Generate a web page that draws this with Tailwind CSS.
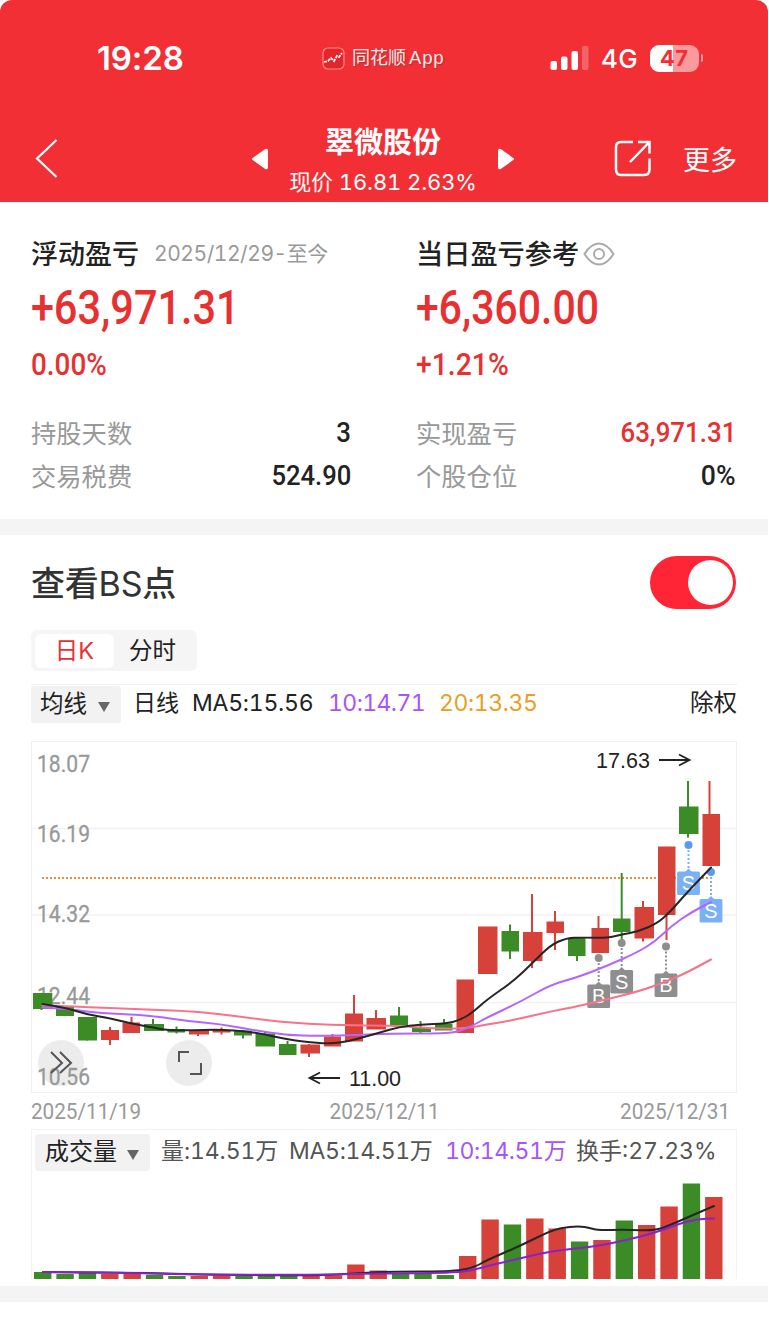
<!DOCTYPE html>
<html lang="zh-CN">
<head>
  <meta charset="UTF-8">
  <meta name="viewport" content="width=device-width, initial-scale=1.0">
  <title>翠微股份</title>
  <script src="https://cdn.jsdelivr.net/npm/@tailwindcss/browser@4"></script>
</head>
<body class="bg-white font-['Inter','Noto_Sans_CJK_SC',sans-serif] tabular-nums text-[#222] whitespace-nowrap">
  <div class="w-[768px] h-[1319px] overflow-hidden">

    <header class="h-[202px] bg-[#f12f35] rounded-t-[12px] text-white">
      <!-- 状态栏 -->
      <div class="h-[116px] flex items-center pl-[97px] pr-[64px]">
        <span class="w-[225px] text-[33px] font-semibold proportional-nums tracking-[-0.1px] pt-px">19:28</span>
        <svg class="w-[23px] h-[23px] mr-[7px]" viewBox="0 0 23 23" fill="none">
          <rect x="1" y="1" width="21" height="21" rx="5" fill="#e3262c" stroke="#ff8b8b" stroke-width="1.2"/>
          <path d="M2 15l4-1 3-3 3 3 3-5 2 1 3-4" stroke="#fff" stroke-width="1.8" stroke-dasharray="3 1"/>
        </svg>
        <span class="text-[18px] text-[#ffe9e9] w-[198px] [text-shadow:1px_1px_1px_#a33]">同花顺<span class="font-['Liberation_Sans'] text-[18.500px] ml-[3px] tracking-[0.8px]">App</span></span>
        <svg class="w-[39px] h-[25px]" viewBox="0 0 39 25" fill="#fff">
          <rect x="0.500" y="15" width="6.500" height="9" rx="2"/>
          <rect x="11" y="10.500" width="6.500" height="13.500" rx="2"/>
          <rect x="21.500" y="5" width="6.500" height="19" rx="2"/>
          <rect x="32" y="0" width="6.500" height="24" rx="2" opacity=".25"/>
        </svg>
        <span class="ml-[12px] w-[49px] text-[26px] font-medium tracking-[0.3px] pt-px">4G</span>
        <div class="w-[49px] h-[27px] rounded-[9px] bg-[linear-gradient(90deg,#fff_47%,#f99a9d_47%)] flex items-center justify-center text-[22px] font-bold text-[#f12f35]">47</div>
        <div class="w-[2px] h-[8px] ml-[2px] rounded-r-full bg-[#f99a9d]"></div>
      </div>
      <!-- 导航栏 -->
      <div class="h-[86px] flex items-center pl-[35px] pr-[31px]">
        <svg class="w-[23px] h-[40px]" viewBox="0 0 23 40" fill="none" stroke="#fff" stroke-width="2.2"><path d="M21.500 1L2 19.500L21.500 38"/></svg>
        <svg class="w-[17px] h-[22px] ml-[193px]" viewBox="0 0 17 22" fill="#fff" stroke="#fff" stroke-width="2" stroke-linejoin="round"><path d="M2 11L14.500 2Q16 1 16 3V19Q16 21 14.500 20Z"/></svg>
        <div class="w-[230px] flex flex-col items-center">
          <h1 class="text-[29px] leading-[39px] font-bold mt-[7px]">翠微股份</h1>
          <p class="text-[22px] leading-[40px] tracking-[-0.1px]">现价 16.81 2.63%</p>
        </div>
        <svg class="w-[17px] h-[22px]" viewBox="0 0 17 22" fill="#fff" stroke="#fff" stroke-width="2" stroke-linejoin="round"><path d="M15 11L2.500 2Q1 1 1 3V19Q1 21 2.500 20Z"/></svg>
        <svg class="w-[38px] h-[38px] ml-[99px]" viewBox="0 0 38 38" fill="none" stroke="#fff" stroke-width="2.500"><path d="M19 2H7Q2 2 2 7V29.500Q2 35 7 35H30Q35.500 35 35.500 29.500V18.500M24 2H35.500V13.500M35.500 2L16 22"/></svg>
        <span class="ml-auto mt-[4px] text-[27px]">更多</span>
      </div>
    </header>

    <!-- 盈亏汇总 -->
    <section class="h-[317px] pt-[32px] pl-[31px] pr-[32px] grid grid-cols-[320px_320px] gap-x-[65px] content-start">
      <div>
        <div class="h-[40px] flex items-center"><h2 class="text-[27px] font-medium pt-[2px]">浮动盈亏</h2><span class="ml-[15px] text-[21px] text-[#999] tracking-[-0.45px]">2025/12/29-至今</span></div>
        <p class="h-[66px] leading-[66px] pt-px font-[Roboto] font-medium text-[47.500px] text-[#e93030] origin-left scale-x-[0.872]">+63,971.31</p>
        <p class="h-[48px] leading-[48px] font-[Roboto] font-medium text-[32px] text-[#e93030] origin-left scale-x-[0.87]">0.00%</p>
      </div>
      <div>
        <div class="h-[40px] flex items-center"><h2 class="text-[27.200px] font-medium pt-[2px]">当日盈亏参考</h2>
          <svg class="ml-[4px] w-[32px] h-[24px]" viewBox="0 0 32 24" fill="none" stroke="#aaa" stroke-width="2"><path d="M1.500 12Q8 1.500 16 1.500T30.500 12Q24 22.500 16 22.500T1.500 12Z"/><circle cx="16" cy="12" r="5"/></svg>
        </div>
        <p class="h-[66px] leading-[66px] pt-px font-[Roboto] font-medium text-[47.500px] text-[#e93030] origin-left scale-x-[0.863]">+6,360.00</p>
        <p class="h-[48px] leading-[48px] font-[Roboto] font-medium text-[32px] text-[#e93030] origin-left scale-x-[0.885]">+1.21%</p>
      </div>
      <dl class="mt-[24px] text-[25.300px] leading-[43px]">
        <div class="flex justify-between h-[43px]"><dt class="text-[#999]">持股天数</dt><dd class="-mt-px font-[Roboto] font-medium text-[28px] origin-right scale-x-[0.92]">3</dd></div>
        <div class="flex justify-between h-[43px]"><dt class="text-[#999]">交易税费</dt><dd class="-mt-px font-[Roboto] font-medium text-[28px] origin-right scale-x-[0.915]">524.90</dd></div>
      </dl>
      <dl class="mt-[24px] text-[25.300px] leading-[43px]">
        <div class="flex justify-between h-[43px]"><dt class="text-[#999]">实现盈亏</dt><dd class="-mt-px font-[Roboto] font-medium text-[28px] text-[#e93030] origin-right scale-x-[0.925]">63,971.31</dd></div>
        <div class="flex justify-between h-[43px]"><dt class="text-[#999]">个股仓位</dt><dd class="-mt-px font-[Roboto] font-medium text-[28px] origin-right scale-x-[0.95]">0%</dd></div>
      </dl>
    </section>

    <div class="h-[16px] bg-[#f4f4f4]"></div>

    <!-- BS点 -->
    <section class="h-[751px] pl-[31px] pr-[31px] pt-[21px]">
      <div class="h-[53px] flex items-center justify-between pr-px">
        <h2 class="text-[34px] font-medium text-[#333] tracking-[-0.2px] pt-px">查看<span class="font-normal">BS</span>点</h2>
        <div class="w-[86px] h-[53px] rounded-full bg-[#ff2436] p-[4px] pr-[3px] flex justify-end"><div class="size-[45px] rounded-full bg-white"></div></div>
      </div>
      <div class="mt-[21px] w-[166px] h-[41px] rounded-[6px] bg-[#f5f5f5] p-[4px] flex text-[23.500px] leading-[33px] text-center">
        <div class="w-[79px] h-[34px] rounded-[6px] bg-white text-[#e93030]">日K</div>
        <div class="w-[77px]">分时</div>
      </div>
      <div class="mt-[13px] h-[39px] border-t border-[#efefef] pt-px flex items-center text-[23px] leading-[34px]">
        <div class="w-[90px] h-[37px] bg-[#f2f2f2] rounded-[3px] pl-[9px] pb-[2px] flex items-center text-[23.500px]">均线<span class="ml-[11px] mt-[6px] border-x-[6px] border-x-transparent border-t-[10px] border-t-[#666]"></span></div>
        <span class="ml-[12px] w-[59px] pb-[3px]">日线</span>
        <span class="w-[136px] pb-[3px] tracking-[-0.25px]">MA5:15.56</span>
        <span class="w-[111px] pb-[3px] tracking-[-0.6px] text-[#a855f7]">10:14.71</span>
        <span class="pb-[3px] tracking-[-0.4px] text-[#e6a023]">20:13.35</span>
        <span class="ml-auto pb-[3px] text-[23.500px]">除权</span>
      </div>
      <svg id="kline" class="block mt-[18px] w-[706px] h-[352px]" viewBox="31 741 706 352" fill="none"></svg>
      <div class="h-[36px] flex items-center justify-between pr-[7px] font-[Roboto] text-[22px] text-[#999]">
        <span class="w-[117px] origin-left scale-x-[0.94]">2025/11/19</span><span class="w-[117px] ml-[8px] scale-x-[0.94]">2025/12/11</span><span class="w-[117px] origin-right scale-x-[0.94]">2025/12/31</span>
      </div>
      <div class="border border-b-0 border-[#f3f3f3] h-[150px]">
        <div class="h-[44px] pl-[3px] flex items-center text-[23px] leading-[34px] text-[#555]">
          <div class="w-[115px] h-[37px] bg-[#f2f2f2] rounded-[4px] pl-[10px] pb-px flex items-center text-[24px] text-[#222]">成交量<span class="ml-[10px] mt-[6px] border-x-[6px] border-x-transparent border-t-[10px] border-t-[#666]"></span></div>
          <span class="ml-[11px] w-[128px] pb-[3px] tracking-[-0.1px]">量:14.51万</span>
          <span class="w-[156px] pb-[3px] tracking-[-0.3px]">MA5:14.51万</span>
          <span class="w-[131px] pb-[3px] tracking-[-0.4px] text-[#a855f7]">10:14.51万</span>
          <span class="pb-[3px]">换手:27.23%</span>
        </div>
        <svg id="volume" class="block w-[704px] h-[105px]" viewBox="32 1174 704 105" fill="none"></svg>
      </div>
    </section>

    <div class="h-[16px] bg-[#f4f4f4]"></div>
  </div>

  <script>
    const RED = "#d6413a", GREEN = "#3b8c26";

    // 颜色, 左, 右, 实体上, 实体下, 影线x, 影线上, 影线下
    const candles = [
      ["G",33,52.3,993,1009,41.5,993,1010],["G",56,74,1007,1016,65,1007,1016],["G",78,97,1017,1040.5,87,1017,1040.5],
      ["R",101,119,1030,1040,110,1027,1045],["R",122.5,140,1022.5,1033,131.5,1017,1033],["G",144,164,1024,1031,153,1019,1031],
      ["G",167.5,185,1029,1032.5,176.5,1026.5,1033.5],["R",189,209,1030.5,1034.5,198,1030,1036],["R",212.5,230.5,1030,1032.5,221.5,1027.5,1034.5],
      ["G",234,252,1030.5,1035.5,243,1030,1038.5],["G",255.5,275,1033.5,1046.5,265,1031,1046],["G",279,296.5,1044,1055,287.5,1041,1055],
      ["R",300.5,320,1044.5,1053.5,309,1044,1057],["R",324,341,1036.5,1046.5,332.5,1034,1046],["R",345,363,1013.5,1041.5,354,995,1041],
      ["R",366.5,386,1018,1029.5,376,1010,1029],["G",390,408,1015.5,1025.5,399,1007,1025],["G",412,431,1028,1032,420.5,1021,1034],
      ["G",435,452.5,1023.5,1030.5,444,1019,1030],["R",456.5,474,979.5,1033,465,980,1033],["R",478,497.5,926.5,974,488,927,974],
      ["G",501.5,519,931,951.5,510,924.5,959],["R",523,542.5,932,961,532,894,968],["R",546.5,564,921.5,933,555,911,950],
      ["G",568,585.5,938,956,577,938,961],["R",591.5,609,928,953,598.5,916,953],["G",613,630.5,918.5,932,621.7,873,941.5],
      ["R",634.5,654,907,938.5,643,901,941.5],["R",658,675.5,846.5,915,666.5,847,940],["G",679,698.5,806.5,834,688,781,837.5],
      ["R",702.5,720,814,866,709.5,781,866]
    ];
    const ma5 = [[42.5,1004],[65,1007.5],[87,1014.5],[109,1018],[131,1023.5],[153,1027.5],[165,1030],[187,1030.5],[220,1029.5],[247,1031.5],[263,1034],[287,1039.5],[320,1043.5],[340,1043],[357,1039],[380,1032.5],[399,1027],[420,1024.5],[447,1023.5],[460,1020],[472,1013],[487,999.5],[513,981.5],[532,963.5],[550,945.5],[566,938],[583,937.5],[607,938],[622,934.5],[638,931.5],[657,923.5],[670,912],[687,892.5],[711,867.5]];
    const ma10 = [[42.5,1007.5],[70,1009],[92,1012.5],[131,1014.5],[153,1016],[187,1021],[220,1024],[253,1030],[285,1035],[320,1036],[357,1035],[390,1033.5],[447,1033.5],[460,1031],[473,1025.5],[486,1018],[520,1002],[551,984.5],[577,977.5],[608,965.5],[638,952],[655,941.5],[672,925.5],[690,913],[711,902]];
    const ma20 = [[42.5,1005.5],[75,1006.5],[131,1009],[187,1011],[220,1014],[253,1018.5],[287,1022.5],[330,1025],[380,1025.5],[399,1026],[420,1027.5],[450,1029],[472,1027.5],[486,1024.5],[507,1021.5],[555,1010.5],[577,1006.5],[608,999],[640,991],[665,982],[685,973.5],[711,959.5]];
    // 买卖点: 文字, x, 圆点y, 标签y, 颜色
    const marks = [["B",598.7,958,984.5,"#8e8e8e"],["S",621.7,943,970,"#8e8e8e"],["B",666,946.5,973.5,"#8e8e8e"],["S",688.5,845,871.5,"#7ab0f5"],["S",711,872,899,"#7ab0f5"]];

    const volTops = [1272,1274,1273,1274,1273,1275,1276,1276,1275.5,1276,1276,1276,1276,1275.5,1264.5,1270.5,1273,1274,1275,1256,1219.5,1224.5,1218.5,1228.5,1241.5,1240,1220.5,1225,1206.5,1183.5,1197];
    const volMa5 = [[43,1272],[130,1272.5],[200,1274.5],[300,1275.5],[340,1274.5],[360,1273],[390,1271.5],[455,1271.5],[475,1267],[487,1260],[520,1246],[552,1230],[570,1226.5],[585,1226.5],[598,1230.5],[625,1229.5],[655,1231],[675,1223],[693,1215],[714,1206]];
    const volMa10 = [[43,1272],[120,1272.5],[165,1274],[250,1275],[340,1274.5],[360,1273.5],[455,1273],[475,1269.5],[490,1265.5],[530,1256],[555,1250.5],[600,1246],[650,1234.5],[680,1223.5],[698,1219],[714,1218.5]];

    // 折线中点平滑
    function curve(p, color, width) {
      let d = `M${p[0]}`;
      for (let i = 1; i < p.length - 1; i++) {
        const mx = (p[i][0] + p[i + 1][0]) / 2, my = (p[i][1] + p[i + 1][1]) / 2;
        d += `Q${p[i]} ${mx},${my}`;
      }
      d += `L${p[p.length - 1]}`;
      return `<path d="${d}" stroke="${color}" stroke-width="${width}" stroke-linecap="round"/>`;
    }

    let k = `<rect x="31.500" y="741.500" width="705" height="351" stroke="#f1f1f1"/>`;
    [828.5, 915, 1002.5].forEach(y => k += `<path d="M32 ${y}H736" stroke="#f2f2f2" stroke-width="1.300"/>`);
    [61, 189].forEach(x => k += `<circle cx="${x}" cy="1063" r="23" fill="#ececec"/>`);
    [["18.07",771.5],["16.19",841.5],["14.32",922],["12.44",1003.5],["10.56",1084.5]].forEach(([t, y]) => {
      k += `<text x="37" y="${y}" fill="#999" stroke="#999" stroke-width="0.300" font-family="Roboto" font-size="23.500" textLength="53" lengthAdjust="spacingAndGlyphs">${t}</text>`;
    });
    k += `<path d="M42 878H711" stroke="#f08a35" stroke-width="2" stroke-dasharray="2 2"/>`;
    candles.forEach(([c, l, r, t, b, x, h, w]) => {
      const col = c === "R" ? RED : GREEN;
      k += `<rect x="${l}" y="${t}" width="${r - l}" height="${b - t}" fill="${col}"/><path d="M${x} ${h}V${w}" stroke="${col}" stroke-width="2"/>`;
    });
    marks.forEach(([s, x, dot, y, col]) => {
      k += `<circle cx="${x}" cy="${dot}" r="4" fill="${col === "#7ab0f5" ? "#5a9bf0" : col}"/>
        <path d="M${x} ${dot + 5}V${y - 3}" stroke="${col}" stroke-width="2" stroke-dasharray="2 2"/>
        <path d="M${x - 4} ${y + 1}L${x} ${y - 3}L${x + 4} ${y + 1}Z" fill="${col}"/>
        <rect x="${x - 11.4}" y="${y}" width="22.800" height="23.500" rx="1.500" fill="${col}"/>
        <text x="${x}" y="${y + 18.5}" text-anchor="middle" fill="#fff" font-family="Liberation Sans" font-size="20">${s}</text>`;
    });
    k += curve(ma20, "#f7728a", 2) + curve(ma10, "#b266ff", 2) + curve(ma5, "#262626", 2);
    k += `<g stroke="#222" stroke-width="1.800"><path d="M659 760H689M679 754.500L689.500 760L679 765.500"/><path d="M340 1078H310M320 1072.500L309.500 1078L320 1083.500"/></g>
      <g fill="#222" font-family="Liberation Sans" font-size="21.500"><text x="596" y="768" textLength="54">17.63</text><text x="349" y="1086" textLength="52">11.00</text></g>
      <g stroke="#555" stroke-width="2"><path d="M51 1052L62 1063L51 1073M60 1052L71 1063L60 1073"/><path d="M179 1062V1052H189M201 1063V1074H190"/></g>`;
    document.getElementById("kline").innerHTML = k;

    let v = "";
    volTops.forEach((t, i) => {
      v += `<rect x="${34 + i * 22.37}" y="${t}" width="17.400" height="${1279 - t}" fill="${candles[i][0] === "R" ? RED : GREEN}"/>`;
    });
    v += curve(volMa5, "#262626", 2) + curve(volMa10, "#8a1fd0", 2);
    document.getElementById("volume").innerHTML = v;
  </script>
</body>
</html>
